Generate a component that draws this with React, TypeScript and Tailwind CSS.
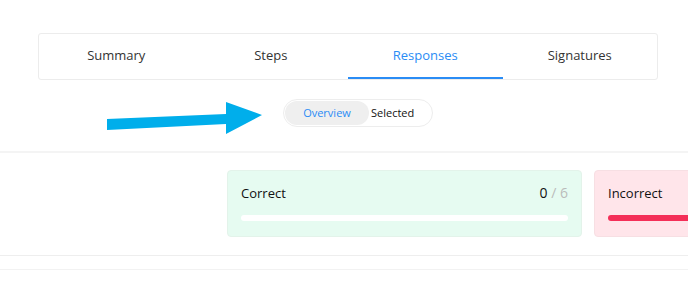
import React from "react";

export default function App() {
  const tabs = ["Summary", "Steps", "Responses", "Signatures"];
  return (
    <div className="w-[688px] h-[285px] bg-white overflow-hidden" style={{ fontFamily: "'Open Sans', sans-serif" }}>
      <div className="pt-[33px] pl-[38px]">
        <div className="w-[620px] h-[47px] border border-[#ececec] rounded-[3px] flex">
          {tabs.map((t) => (
            <div
              key={t}
              className={`flex-1 flex items-center justify-center text-[13px] ${
                t === "Responses" ? "text-[#2a8cf5] border-b-2 border-[#2a8cf5]" : "text-[#333] border-b-2 border-transparent"
              }`}
            >
              {t}
            </div>
          ))}
        </div>
      </div>
      <div className="flex items-center mt-[19px] h-[28px]">
        <svg width="160" height="34" viewBox="0 0 160 34" className="ml-[104px] mr-[18px] mt-[8px]">
          <polygon points="3,19 122,14 122,2 158,15 122,34 122,24 3,30" fill="#00aeeb" />
        </svg>
        <div className="ml-[1px] w-[150px] h-[28px] rounded-full border border-[#ededed] flex items-center p-[1px]">
          <div className="h-full w-[84px] rounded-full bg-[#efefef] flex items-center justify-center text-[11px] text-[#2a8cf5]">
            Overview
          </div>
          <div className="ml-[2px] text-[11px] text-[#111]">Selected</div>
        </div>
      </div>
      <div className="mt-[24px] h-[2px] bg-[#f4f4f4]" />
      <div className="flex gap-[12px] pl-[227px] mt-[17px] h-[67px]">
        <div className="shrink-0 w-[355px] h-[67px] rounded-[4px] bg-[#e6fbf1] border border-[#e3f3ea] px-[13px] pt-[12px]">
          <div className="flex justify-between items-center text-[13px] leading-[20px]">
            <span className="text-[#111]">Correct</span>
            <span>
              <span className="text-[#111] text-[14px]">0</span>
              <span className="text-[#bbb] text-[14px]"> / 6</span>
            </span>
          </div>
          <div className="mt-[12px] h-[6px] rounded-full bg-white" />
        </div>
        <div className="shrink-0 w-[355px] h-[67px] rounded-[4px] bg-[#ffe5ea] border border-[#f7dfe3] px-[13px] pt-[12px]">
          <div className="flex justify-between items-center text-[13px] leading-[20px]">
            <span className="text-[#111]">Incorrect</span>
          </div>
          <div className="mt-[12px] h-[6px] rounded-full bg-[#f42f58]" />
        </div>
      </div>
      <div className="mt-[18px] h-[1px] bg-[#eeeeee]" />
      <div className="mt-[13px] h-[1px] bg-[#f2f2f2]" />
    </div>
  );
}
